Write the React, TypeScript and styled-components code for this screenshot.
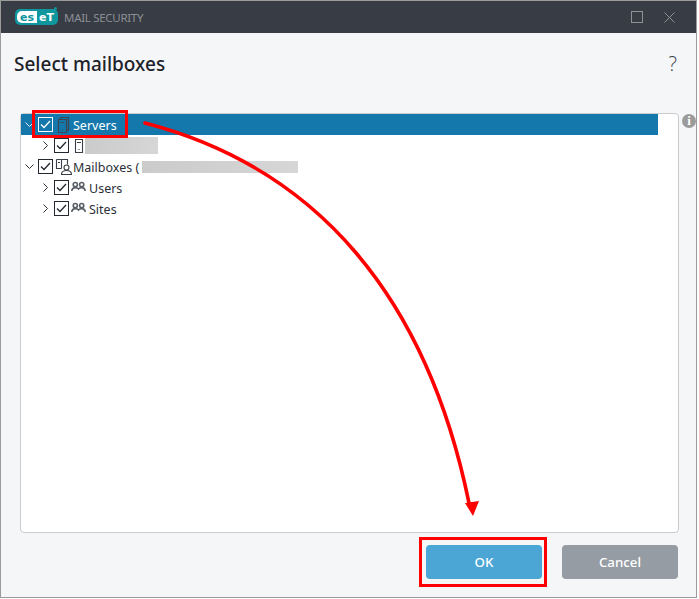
import styled, { createGlobalStyle } from "styled-components";

const GlobalStyle = createGlobalStyle`
  html, body {
    margin: 0;
    padding: 0;
    background: #fff;
  }
  body {
    font-family: "Noto Sans", "Open Sans", sans-serif;
  }
`;

const Page = styled.div`
  position: relative;
  width: 699px;
  height: 599px;
  overflow: hidden;
`;

const Window = styled.div`
  box-sizing: border-box;
  width: 697px;
  height: 598px;
  border: 1px solid #9b9b9b;
  display: flex;
  flex-direction: column;
  background: #f4f6f8;
`;

const TitleBar = styled.div`
  height: 32px;
  flex: none;
  background: #383c44;
  display: flex;
  align-items: center;
  padding: 0 21px 0 14px;
`;

const Logo = styled.div`
  position: relative;
  display: flex;
  align-items: center;
  width: 43px;
  height: 16px;
  padding: 0 0 0 2px;
  box-sizing: border-box;
  background: #0f969e;
  border-radius: 5px;
  font-family: "DejaVu Sans", sans-serif;
  font-weight: 700;
  font-size: 11px;
  line-height: 1;
`;

const LogoDot = styled.span`
  position: absolute;
  right: 1px;
  top: -2px;
  width: 3px;
  height: 3px;
  border-radius: 50%;
  background: #0f969e;
`;

const LogoInverse = styled.span`
  display: flex;
  align-items: center;
  justify-content: center;
  width: 20px;
  height: 12px;
  background: #fff;
  color: #0f969e;
  border-radius: 5px 0 0 5px;
`;

const LogoPlain = styled.span`
  margin-left: 2px;
  color: #fff;
`;

const ProductName = styled.span`
  margin-left: 6px;
  font-size: 11.5px;
  letter-spacing: -0.3px;
  color: #8c8f95;
  flex: 1;
`;

const WindowButtons = styled.div`
  display: flex;
  align-items: center;
  gap: 21px;
`;

const MaxBox = styled.div`
  width: 10px;
  height: 10px;
  border: 1px solid #8e9196;
`;

const Header = styled.div`
  height: 80px;
  flex: none;
  box-sizing: border-box;
  padding: 17px 19px 0 13px;
  display: flex;
  justify-content: space-between;
  align-items: flex-start;
`;

const Title = styled.h1`
  margin: 0;
  font-size: 19px;
  line-height: 28px;
  font-weight: 500;
  color: #1d2129;
`;

const Help = styled.span`
  font-family: "Open Sans", sans-serif;
  font-size: 20px;
  font-weight: 300;
  line-height: 28px;
  color: #3c424a;
`;

const PanelRow = styled.div`
  height: 420px;
  flex: none;
  display: flex;
  padding-left: 19px;
`;

const Panel = styled.div`
  box-sizing: border-box;
  width: 660px;
  height: 420px;
  padding: 0 20px 0 0;
  background: #fff;
  border: 1px solid #c9cbce;
  border-radius: 4px;
`;

const InfoBadge = styled.span`
  width: 14px;
  height: 14px;
  margin: 1px 0 0 3px;
  border-radius: 50%;
  background: #9b9b9b;
  color: #fff;
  font-family: "Liberation Serif", serif;
  font-weight: 700;
  font-size: 13px;
  line-height: 14px;
  text-align: center;
`;

const Row = styled.div<{ $selected?: boolean }>`
  height: 21px;
  display: flex;
  align-items: center;
  font-size: 12.5px;
  white-space: nowrap;
  color: ${(p) => (p.$selected ? "#fff" : "#2c3038")};
  background: ${(p) => (p.$selected ? "#1578ac" : "transparent")};
`;

const Chevron = styled.svg<{ $level: number; $light?: boolean }>`
  flex: none;
  width: 9px;
  height: 9px;
  margin-left: ${(p) => (p.$level === 0 ? 4 : 20)}px;
  margin-right: 4px;
  fill: none;
  stroke: ${(p) => (p.$light ? "#e4f0f6" : "#2c3038")};
  stroke-width: 1;
`;

const CheckBox = styled.span<{ $light?: boolean }>`
  flex: none;
  box-sizing: border-box;
  width: 15px;
  height: 15px;
  display: flex;
  align-items: center;
  justify-content: center;
  background: ${(p) => (p.$light ? "transparent" : "#fff")};
  border: 1px solid ${(p) => (p.$light ? "#fff" : "#23272e")};
  color: ${(p) => (p.$light ? "#fff" : "#23272e")};
`;

const IconSlot = styled.svg<{ $width: number; $gap: number; $tone?: string; $weight?: number }>`
  flex: none;
  width: ${(p) => p.$width}px;
  height: 18px;
  margin-left: ${(p) => p.$gap}px;
  fill: none;
  color: ${(p) => p.$tone ?? "#3a3f47"};
  stroke: currentColor;
  stroke-width: ${(p) => p.$weight ?? 1.1};
`;

const Label = styled.span<{ $gap?: number }>`
  margin-left: ${(p) => p.$gap ?? 3}px;
  padding-top: 2px;
`;

const Redacted = styled.span<{ $wide?: boolean }>`
  display: inline-block;
  flex: none;
  height: ${(p) => (p.$wide ? 12 : 17)}px;
  width: ${(p) => (p.$wide ? 156 : 73)}px;
  margin-left: ${(p) => (p.$wide ? 3 : 1)}px;
  background: linear-gradient(90deg, #cbcbcb, #d6d6d6);
`;

const Footer = styled.div`
  flex: 1;
  display: flex;
  justify-content: flex-end;
  gap: 20px;
  padding: 12px 18px 0 0;
`;

const ActionButton = styled.button<{ $primary?: boolean }>`
  width: 116px;
  height: 34px;
  border: none;
  border-radius: 4px;
  padding: 0;
  font-family: inherit;
  font-size: 13.3px;
  font-weight: 500;
  color: #fff;
  background: ${(p) => (p.$primary ? "#4ba6d6" : "#959ca3")};
`;

const Highlight = styled.div<{ $x: number; $y: number; $w: number; $h: number }>`
  position: absolute;
  box-sizing: border-box;
  left: ${(p) => p.$x}px;
  top: ${(p) => p.$y}px;
  width: ${(p) => p.$w}px;
  height: ${(p) => p.$h}px;
  border: 3px solid #f00;
`;

const ArrowLayer = styled.svg`
  position: absolute;
  left: 0;
  top: 0;
  width: 699px;
  height: 599px;
  pointer-events: none;
`;

const Check = ({ light }: { light?: boolean }) => (
  <CheckBox $light={light}>
    <svg width="11" height="9" viewBox="0 0 11 9" fill="none" stroke="currentColor" strokeWidth="1.3">
      <path d="M1 4.5 L4 7.5 L10 1" />
    </svg>
  </CheckBox>
);

const ChevronDown = ({ light }: { light?: boolean }) => (
  <Chevron $level={0} $light={light} viewBox="0 0 9 9">
    <path d="M0.5 2.5 L4.5 6.5 L8.5 2.5" />
  </Chevron>
);

const ChevronRight = () => (
  <Chevron $level={1} viewBox="0 0 9 9">
    <path d="M2.5 0.5 L6.5 4.5 L2.5 8.5" />
  </Chevron>
);

const ServersIcon = () => (
  <IconSlot $width={13} $gap={4} $tone="#3b4650" $weight={1.2} viewBox="0 0 13 18">
    <path d="M3.5 3.5 V1.5 H11.5 V14.5 H9.5" />
    <path d="M1.5 3.5 H9.5 V16.5 H1.5 Z" />
    <path d="M3.5 6.5 H7.5 M5.5 13.5 V14.5" />
  </IconSlot>
);

const ServerIcon = () => (
  <IconSlot $width={10} $gap={5} viewBox="0 0 10 18">
    <path d="M1.5 2.5 H8.5 V15.5 H1.5 Z M3 5.5 H7 M5 12 V13" />
  </IconSlot>
);

const MailboxesIcon = () => (
  <IconSlot $width={17} $gap={2} viewBox="0 0 17 18">
    <path d="M1.5 1.5 H12.5 V6.5 M1.5 1.5 V10.5 H6.5 M6.5 1.5 V10.5 M3 4.5 H5" />
    <circle cx="11.5" cy="9.5" r="2.5" />
    <path d="M6.5 16.5 C6.5 13.5 9 12.5 11.5 12.5 C14 12.5 16.5 13.5 16.5 16.5 Z" />
  </IconSlot>
);

const GroupIcon = () => (
  <IconSlot $width={15} $gap={2} $tone="#5a5f67" $weight={1.6} viewBox="0 0 15 18">
    <circle cx="4.3" cy="5.6" r="2.1" />
    <circle cx="10.7" cy="5.6" r="2.1" />
    <path d="M0.8 12 C1 9.5 2.5 8.6 4.5 8.6 C5.8 8.6 6.8 9.1 7.5 10 C8.2 9.1 9.2 8.6 10.5 8.6 C12.5 8.6 14 9.5 14.2 12" />
  </IconSlot>
);

export default function App() {
  return (
    <Page>
      <GlobalStyle />
      <Window>
        <TitleBar>
          <Logo>
            <LogoInverse>es</LogoInverse>
            <LogoPlain>eT</LogoPlain>
            <LogoDot />
          </Logo>
          <ProductName>MAIL SECURITY</ProductName>
          <WindowButtons>
            <MaxBox />
            <svg width="11" height="11" viewBox="0 0 11 11" stroke="#8e9196" fill="none">
              <path d="M0.5 0.5 L10.5 10.5 M10.5 0.5 L0.5 10.5" />
            </svg>
          </WindowButtons>
        </TitleBar>

        <Header>
          <Title>Select mailboxes</Title>
          <Help>?</Help>
        </Header>

        <PanelRow>
          <Panel>
            <Row $selected>
              <ChevronDown light />
              <Check light />
              <ServersIcon />
              <Label>Servers</Label>
            </Row>
            <Row>
              <ChevronRight />
              <Check />
              <ServerIcon />
              <Redacted />
            </Row>
            <Row>
              <ChevronDown />
              <Check />
              <MailboxesIcon />
              <Label $gap={1}>Mailboxes (</Label>
              <Redacted $wide />
            </Row>
            <Row>
              <ChevronRight />
              <Check />
              <GroupIcon />
              <Label>Users</Label>
            </Row>
            <Row>
              <ChevronRight />
              <Check />
              <GroupIcon />
              <Label>Sites</Label>
            </Row>
          </Panel>
          <InfoBadge>i</InfoBadge>
        </PanelRow>

        <Footer>
          <ActionButton $primary>OK</ActionButton>
          <ActionButton>Cancel</ActionButton>
        </Footer>
      </Window>

      <Highlight $x={32} $y={110} $w={96} $h={28} />
      <Highlight $x={419} $y={537} $w={128} $h={50} />
      <ArrowLayer viewBox="0 0 699 599">
        <path d="M145 123 C318 168, 427 298, 469 503" fill="none" stroke="#f00" strokeWidth="3.6" strokeLinecap="round" />
        <path d="M465 503 L479 501 L473 516 Z" fill="#f00" />
      </ArrowLayer>
    </Page>
  );
}
